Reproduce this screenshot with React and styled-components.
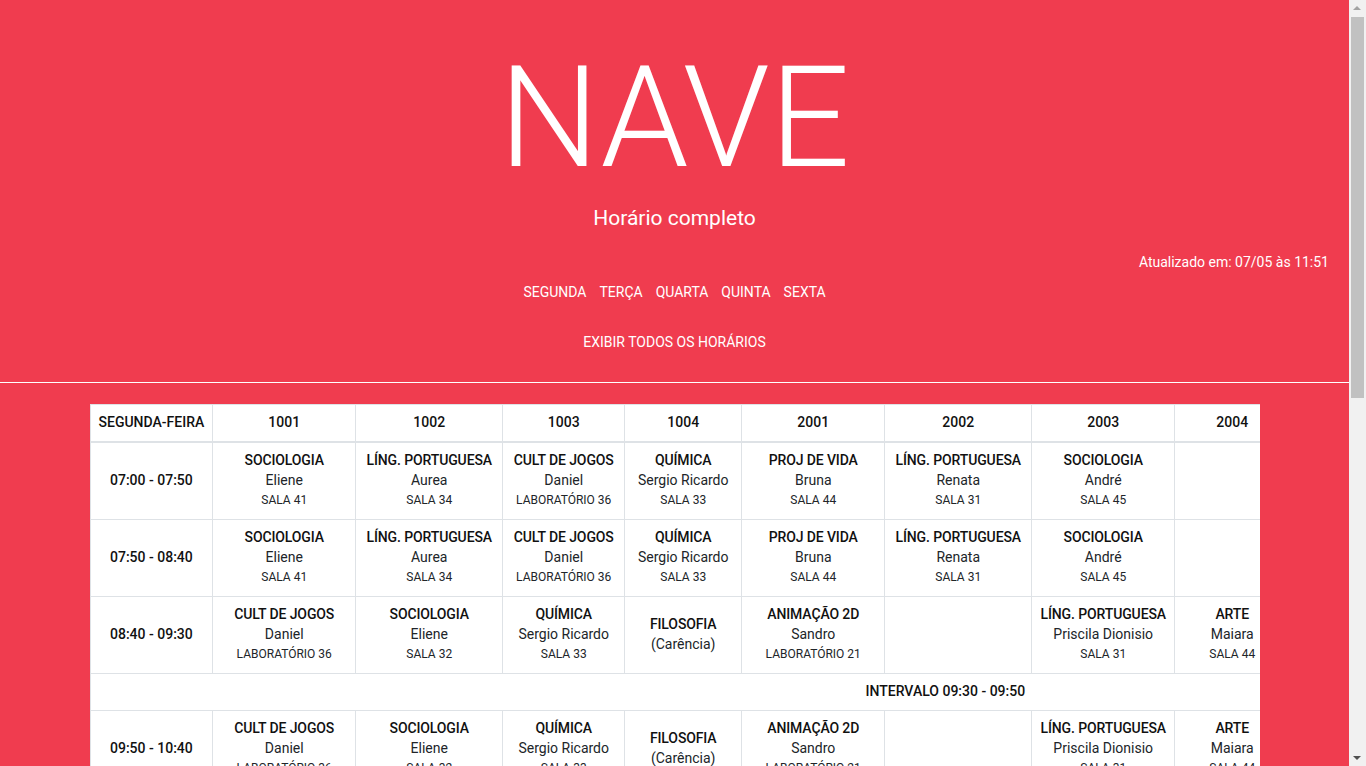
import React from 'react';
import styled, { createGlobalStyle } from 'styled-components';

const GlobalStyle = createGlobalStyle`
  html, body {
    margin: 0;
    padding: 0;
    background: #f03c4f;
  }
  body {
    font-family: Roboto, 'Liberation Sans', sans-serif;
    color: #212529;
  }
`;

const columns = [
  { name: '1001', w: 143 },
  { name: '1002', w: 147 },
  { name: '1003', w: 122 },
  { name: '1004', w: 117 },
  { name: '2001', w: 143 },
  { name: '2002', w: 147 },
  { name: '2003', w: 143 },
  { name: '2004', w: 115 },
  { name: '3001', w: 143 },
  { name: '3002', w: 147 },
  { name: '3003', w: 122 },
  { name: '3004', w: 99 },
];

const c = (subject, teacher, room) => ({ subject, teacher, room });
const vacant = (subject) => ({ subject, teacher: '(Carência)' });

const firstBlock = [
  c('SOCIOLOGIA', 'Eliene', 'SALA 41'),
  c('LÍNG. PORTUGUESA', 'Aurea', 'SALA 34'),
  c('CULT DE JOGOS', 'Daniel', 'LABORATÓRIO 36'),
  c('QUÍMICA', 'Sergio Ricardo', 'SALA 33'),
  c('PROJ DE VIDA', 'Bruna', 'SALA 44'),
  c('LÍNG. PORTUGUESA', 'Renata', 'SALA 31'),
  c('SOCIOLOGIA', 'André', 'SALA 45'),
  null,
  c('MATEMÁTICA', 'Carlos', 'SALA 21'),
  c('HISTÓRIA', 'Patrícia', 'SALA 22'),
  c('BIOLOGIA', 'Márcia', 'SALA 23'),
  c('INGLÊS', 'Paula', 'SALA 24'),
];

const secondBlock = [
  c('CULT DE JOGOS', 'Daniel', 'LABORATÓRIO 36'),
  c('SOCIOLOGIA', 'Eliene', 'SALA 32'),
  c('QUÍMICA', 'Sergio Ricardo', 'SALA 33'),
  vacant('FILOSOFIA'),
  c('ANIMAÇÃO 2D', 'Sandro', 'LABORATÓRIO 21'),
  null,
  c('LÍNG. PORTUGUESA', 'Priscila Dionisio', 'SALA 31'),
  c('ARTE', 'Maiara', 'SALA 44'),
  c('FÍSICA', 'Roberto', 'SALA 21'),
  c('GEOGRAFIA', 'Luciana', 'SALA 22'),
  null,
  c('INGLÊS', 'Paula', 'SALA 24'),
];

const thirdBlock = [
  c('MATEMÁTICA', 'Carlos', 'SALA 41'),
  c('HISTÓRIA', 'Patrícia', 'SALA 32'),
  c('ARTE', 'Maiara', 'SALA 33'),
  c('BIOLOGIA', 'Márcia', 'SALA 34'),
  c('PROGRAMAÇÃO', 'Thiago', 'LABORATÓRIO 21'),
  c('FÍSICA', 'Roberto', 'SALA 31'),
  c('GEOGRAFIA', 'Luciana', 'SALA 45'),
  c('INGLÊS', 'Paula', 'SALA 44'),
  null,
  c('SOCIOLOGIA', 'Eliene', 'SALA 22'),
  c('QUÍMICA', 'Sergio Ricardo', 'SALA 23'),
  null,
];

const schedule = [
  { time: '07:00 - 07:50', cells: firstBlock },
  { time: '07:50 - 08:40', cells: firstBlock },
  { time: '08:40 - 09:30', cells: secondBlock },
  { break: 'INTERVALO 09:30 - 09:50' },
  { time: '09:50 - 10:40', cells: secondBlock },
  { time: '10:40 - 11:30', cells: thirdBlock },
  { time: '11:30 - 12:20', cells: thirdBlock },
  { break: 'ALMOÇO 12:20 - 13:20' },
  { time: '13:20 - 14:10', cells: firstBlock },
  { time: '14:10 - 15:00', cells: secondBlock },
];

const days = ['SEGUNDA', 'TERÇA', 'QUARTA', 'QUINTA', 'SEXTA'];

export default function App() {
  return (
    <Page>
      <GlobalStyle />
      <Header>
        <Title>NAVE</Title>
        <Subtitle>Horário completo</Subtitle>
        <Updated>Atualizado em: 07/05 às 11:51</Updated>
        <DayNav>
          {days.map((d) => (
            <NavLink key={d} href="#">{d}</NavLink>
          ))}
        </DayNav>
        <ShowAll href="#">EXIBIR TODOS OS HORÁRIOS</ShowAll>
      </Header>

      <TableWrap>
        <Table>
          <colgroup>
            <Col $w={122} />
            {columns.map((col) => (
              <Col key={col.name} $w={col.w} />
            ))}
          </colgroup>
          <thead>
            <tr>
              <Th>SEGUNDA-FEIRA</Th>
              {columns.map((col) => (
                <Th key={col.name}>{col.name}</Th>
              ))}
            </tr>
          </thead>
          <tbody>
            {schedule.map((row, i) =>
              row.break ? (
                <tr key={i}>
                  <BreakCell colSpan={columns.length + 1}>{row.break}</BreakCell>
                </tr>
              ) : (
                <tr key={i}>
                  <TimeCell>{row.time}</TimeCell>
                  {row.cells.map((cell, j) => (
                    <Td key={j}>
                      {cell && (
                        <>
                          <Subject>{cell.subject}</Subject>
                          <Teacher>{cell.teacher}</Teacher>
                          {cell.room && <Room>{cell.room}</Room>}
                        </>
                      )}
                    </Td>
                  ))}
                </tr>
              )
            )}
          </tbody>
        </Table>
      </TableWrap>

      {/* the browser's own scrollbar is not drawn by the headless shot */}
      <ScrollTrack>
        <ArrowUp />
        <Thumb />
        <ArrowDown />
      </ScrollTrack>
    </Page>
  );
}

const Page = styled.div`
  min-height: 100vh;
  margin-right: 17px;
  background: #f03c4f;
  padding-bottom: 40px;
`;

const Header = styled.header`
  display: flex;
  flex-direction: column;
  align-items: center;
  padding: 30px 0 30px;
  border-bottom: 1px solid #ffffff;
  color: #ffffff;
`;

const Title = styled.h1`
  margin: 0;
  font-size: 141px;
  line-height: 176px;
  font-weight: 300;
`;

const Subtitle = styled.h2`
  margin: 0;
  font-size: 21px;
  line-height: 1.2;
  font-weight: 400;
`;

const Updated = styled.div`
  align-self: stretch;
  text-align: right;
  padding-right: 20px;
  margin-top: 21px;
  font-size: 14px;
  line-height: 20px;
`;

const DayNav = styled.nav`
  display: flex;
  gap: 13px;
  margin-top: 10px;
`;

const NavLink = styled.a`
  color: #ffffff;
  text-decoration: none;
  font-size: 14px;
  line-height: 20px;
`;

const ShowAll = styled(NavLink)`
  margin-top: 30px;
`;

const TableWrap = styled.div`
  width: 1170px;
  margin: 21px auto 0;
  overflow-x: auto;
`;

const Table = styled.table`
  border-collapse: collapse;
  background: #ffffff;
  table-layout: fixed;
  width: max-content;
  font-size: 14px;
  line-height: 20px;
  text-align: center;
  color: #111111;
`;

const Col = styled.col`
  width: ${(p) => p.$w}px;
`;

const Th = styled.th`
  padding: 7px 8px 9px;
  font-weight: 500;
  border: 1px solid #dee2e6;
  border-bottom-width: 2px;
  white-space: nowrap;
`;

const Td = styled.td`
  padding: 7px 8px 9px;
  border: 1px solid #dee2e6;
  vertical-align: middle;
  white-space: nowrap;
  height: 60px;
`;

const TimeCell = styled(Td)`
  font-weight: 500;
`;

const BreakCell = styled.td`
  padding: 7px 8px 9px;
  border: 1px solid #dee2e6;
  font-weight: 500;
`;

const Subject = styled.div`
  font-weight: 500;
  letter-spacing: -0.12px;
`;

const Teacher = styled.div`
  font-weight: 400;
  color: #212529;
`;

const Room = styled.div`
  font-size: 12px;
  color: #212529;
`;

const ScrollTrack = styled.div`
  position: fixed;
  top: 0;
  right: 0;
  width: 17px;
  height: 100vh;
  background: #f1f1f1;
`;

const Thumb = styled.div`
  position: absolute;
  top: 17px;
  left: 2px;
  right: 2px;
  height: 381px;
  background: #c1c1c1;
`;

const ArrowUp = styled.div`
  position: absolute;
  top: 6px;
  left: 4px;
  width: 0;
  height: 0;
  border-left: 4px solid transparent;
  border-right: 4px solid transparent;
  border-bottom: 4px solid #a3a3a3;
`;

const ArrowDown = styled.div`
  position: absolute;
  bottom: 6px;
  left: 4px;
  width: 0;
  height: 0;
  border-left: 4px solid transparent;
  border-right: 4px solid transparent;
  border-top: 4px solid #505050;
`;
